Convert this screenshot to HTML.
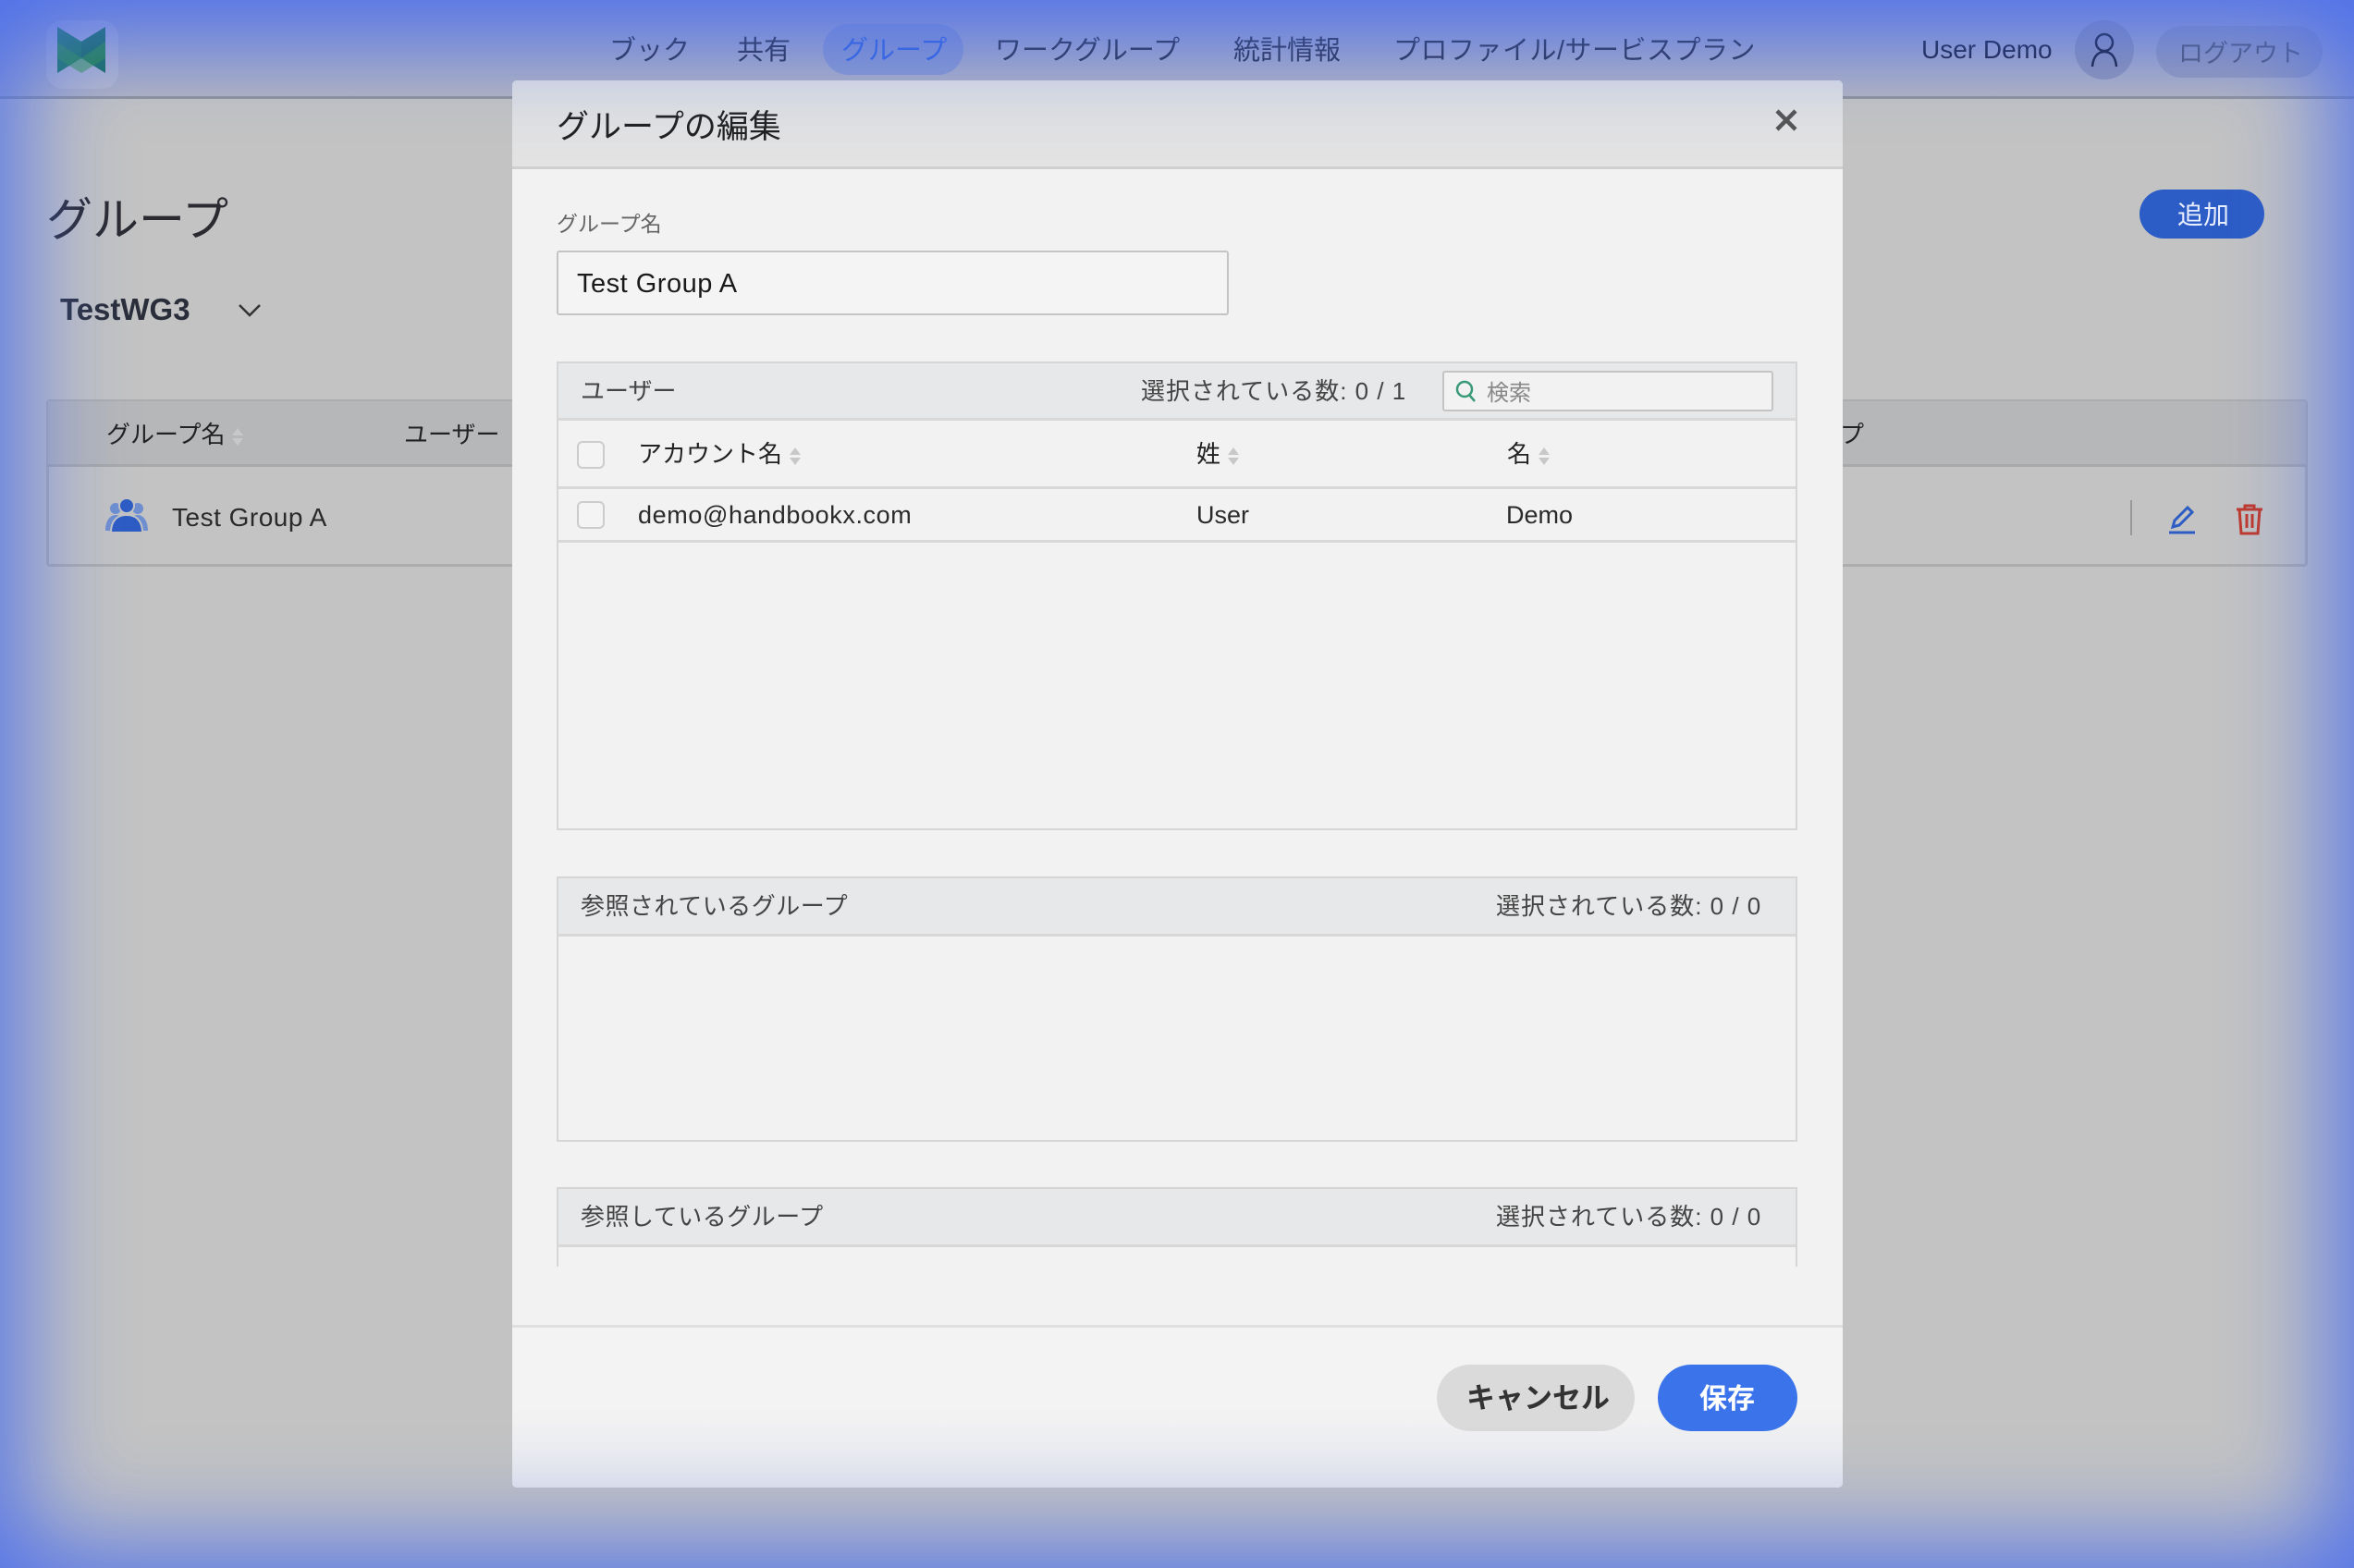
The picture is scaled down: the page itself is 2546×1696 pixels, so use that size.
<!DOCTYPE html>
<html><head><meta charset="utf-8"><style>
*{box-sizing:border-box;margin:0;padding:0}
body{width:2546px;height:1696px;overflow:hidden;position:relative;background:#c3c3c3;font-family:"Liberation Sans","Noto Sans CJK JP",sans-serif;color:#222}
.a{position:absolute;white-space:nowrap}
.nav{left:0;top:0;width:2546px;height:107px;background:linear-gradient(#8595d6,#b0b3c2);border-bottom:3px solid #8f939c}
.navi{font-size:29px;color:#2a3350;top:31px}
.vig{left:0;top:0;width:2546px;height:1696px;box-shadow:inset 0 0 110px 22px rgba(75,110,235,.95);pointer-events:none}
.modal{left:554px;top:87px;width:1439px;height:1522px;background:#f2f2f2;border-radius:5px;overflow:hidden}
.mh{left:0;top:0;width:1439px;height:96px;background:linear-gradient(#dcdee2,#e3e3e3);border-bottom:3px solid #d0d0d0}
.panel{border:2px solid #d6d6d6;background:#f2f2f2}
.ph{background:#e7e8ea;border-bottom:3px solid #d8d8d8}
.t26{font-size:26px;color:#444}
.cnt{letter-spacing:1px}
.sort{display:inline-block;vertical-align:middle;margin-left:8px;width:12px}
.sort:before{content:"";display:block;border:6px solid transparent;border-bottom:8px solid #c8c8c8;border-top:0;margin-bottom:3px}
.sort:after{content:"";display:block;border:6px solid transparent;border-top:8px solid #c8c8c8;border-bottom:0}
.cb{width:30px;height:30px;border:2px solid #ccc;border-radius:6px;background:#f4f4f4}
</style></head><body>
<div class="a nav"></div>
<div class="a" style="left:50px;top:22px;width:78px;height:74px;border-radius:18px;background:rgba(255,255,255,.12)"></div>
<svg class="a" style="left:62px;top:29px" width="52" height="50" viewBox="0 0 52 50">
<polygon points="0,0 26,16 26,34 0,50" fill="#1a7a5a"/><polygon points="52,0 26,16 26,34 52,50" fill="#17705a"/>
<polygon points="0,16 26,34 52,16 52,34 26,50 0,34" fill="#2e9a3a" opacity=".55"/></svg>
<div class="a navi" style="left:659px">ブック</div>
<div class="a navi" style="left:797px">共有</div>
<div class="a" style="left:890px;top:26px;width:152px;height:55px;border-radius:28px;background:rgba(110,135,215,.55)"></div>
<div class="a navi" style="left:910px;color:#3366e0">グループ</div>
<div class="a navi" style="left:1076px">ワークグループ</div>
<div class="a navi" style="left:1334px">統計情報</div>
<div class="a navi" style="left:1507px;letter-spacing:.5px">プロファイル/サービスプラン</div>
<div class="a" style="left:2078px;top:38px;font-size:28px;color:#1a2240">User Demo</div>
<div class="a" style="left:2244px;top:22px;width:64px;height:64px;border-radius:50%;background:rgba(120,130,175,.6)"></div>
<svg class="a" style="left:2260px;top:34px" width="32" height="40" viewBox="0 0 32 40" fill="none" stroke="#1a2240" stroke-width="2.5"><circle cx="16" cy="12" r="9"/><path d="M3 38 C4 26 10 22 16 22 C22 22 28 26 29 38"/></svg>
<div class="a" style="left:2332px;top:28px;width:180px;height:56px;border-radius:28px;background:rgba(120,130,175,.45)"></div>
<div class="a" style="left:2356px;top:36px;font-size:27px;color:#505a78">ログアウト</div>

<div class="a" style="left:50px;top:198px;font-size:50px;color:#2a2a30">グループ</div>
<div class="a" style="left:65px;top:316px;font-size:33px;font-weight:bold;color:#2a2e3a">TestWG3</div>
<svg class="a" style="left:257px;top:328px" width="26" height="16" viewBox="0 0 26 16" fill="none" stroke="#333" stroke-width="2.5"><path d="M2 2 L13 13 L24 2"/></svg>
<div class="a" style="left:2314px;top:205px;width:135px;height:53px;border-radius:27px;background:#2c5cc5"></div>
<div class="a" style="left:2355px;top:211px;font-size:28px;color:#e8eeff">追加</div>

<div class="a" style="left:50px;top:432px;width:2446px;height:181px;border:3px solid #adadad;border-radius:4px"></div>
<div class="a" style="left:52px;top:434px;width:2442px;height:71px;background:#b6b7b9;border-bottom:3px solid #a9a9a9"></div>
<div class="a" style="left:115px;top:450px;font-size:26px;color:#222">グループ名<span class="sort"></span></div>
<div class="a" style="left:437px;top:450px;font-size:26px;color:#222">ユーザー</div>
<div class="a" style="left:1990px;top:450px;font-size:26px;color:#222">プ</div>
<svg class="a" style="left:114px;top:538px" width="46" height="38" viewBox="0 0 46 38"><circle cx="11" cy="12" r="6" fill="#6f8fd0"/><circle cx="35" cy="12" r="6" fill="#6f8fd0"/><path d="M0 36 C0 24 6 19 11 19 C16 19 22 24 22 36Z M24 36 C24 24 30 19 35 19 C40 19 46 24 46 36Z" fill="#6f8fd0"/><circle cx="23" cy="9" r="8" fill="#2d5cc4" stroke="#c3c3c3" stroke-width="2"/><path d="M6 38 C6 25 13 19 23 19 C33 19 40 25 40 38Z" fill="#2d5cc4" stroke="#c3c3c3" stroke-width="2"/></svg>
<div class="a" style="left:186px;top:544px;font-size:28px;color:#2a2a2a;letter-spacing:.5px">Test Group A</div>
<div class="a" style="left:2304px;top:541px;width:2px;height:38px;background:#999"></div>
<svg class="a" style="left:2344px;top:546px" width="32" height="32" viewBox="0 0 32 32" fill="none" stroke="#2d5cc4" stroke-width="3"><path d="M6 24 L8 17 L22 3 L27 8 L13 22 Z"/><path d="M2 30 H30"/></svg>
<svg class="a" style="left:2418px;top:545px" width="30" height="34" viewBox="0 0 30 34" fill="none" stroke="#c0392b" stroke-width="3"><path d="M1 6 H29 M10 6 V2 H20 V6 M4 6 L6 32 H24 L26 6 M12 11 V26 M18 11 V26"/></svg>

<div class="a modal">
 <div class="a mh"></div>
 <div class="a" style="left:48px;top:22px;font-size:35px;color:#222">グループの編集</div>
 <svg class="a" style="left:1366px;top:31px" width="24" height="24" viewBox="0 0 24 24" stroke="#555" stroke-width="4.5"><path d="M2 2 L22 22 M22 2 L2 22"/></svg>
 <div class="a" style="left:48px;top:136px;font-size:23px;color:#666">グループ名</div>
 <div class="a" style="left:48px;top:184px;width:727px;height:70px;border:2px solid #c4c4c4;border-radius:3px;background:#f4f4f4"></div>
 <div class="a" style="left:70px;top:204px;font-size:29px;color:#1a1a1a;letter-spacing:.5px">Test Group A</div>

 <div class="a panel" style="left:48px;top:304px;width:1342px;height:507px"></div>
 <div class="a ph" style="left:50px;top:306px;width:1338px;height:62px"></div>
 <div class="a t26" style="left:74px;top:316px">ユーザー</div>
 <div class="a t26 cnt" style="left:680px;top:316px">選択されている数: 0 / 1</div>
 <div class="a" style="left:1006px;top:314px;width:358px;height:44px;border:2px solid #c4c4c4;border-radius:3px;background:#f2f2f2"></div>
 <svg class="a" style="left:1020px;top:324px" width="24" height="26" viewBox="0 0 24 26" fill="none" stroke="#3a9a78" stroke-width="2.5"><circle cx="10" cy="10" r="8"/><path d="M15 16 L21 23"/></svg>
 <div class="a" style="left:1054px;top:318px;font-size:24px;color:#888">検索</div>
 <div class="a" style="left:50px;top:439px;width:1338px;height:3px;background:#d8d8d8"></div>
 <div class="a" style="left:50px;top:497px;width:1338px;height:3px;background:#d8d8d8"></div>
 <div class="a cb" style="left:70px;top:390px"></div>
 <div class="a" style="left:136px;top:384px;font-size:26px;color:#222">アカウント名<span class="sort"></span></div>
 <div class="a" style="left:740px;top:384px;font-size:26px;color:#222">姓<span class="sort"></span></div>
 <div class="a" style="left:1076px;top:384px;font-size:26px;color:#222">名<span class="sort"></span></div>
 <div class="a cb" style="left:70px;top:455px"></div>
 <div class="a" style="left:136px;top:455px;font-size:27px;color:#2a2a2a;letter-spacing:.6px">demo@handbookx.com</div>
 <div class="a" style="left:740px;top:455px;font-size:27px;color:#2a2a2a">User</div>
 <div class="a" style="left:1075px;top:455px;font-size:27px;color:#2a2a2a">Demo</div>

 <div class="a panel" style="left:48px;top:861px;width:1342px;height:287px"></div>
 <div class="a ph" style="left:50px;top:863px;width:1338px;height:63px"></div>
 <div class="a t26" style="left:74px;top:873px;letter-spacing:.5px">参照されているグループ</div>
 <div class="a t26 cnt" style="left:1064px;top:873px">選択されている数: 0 / 0</div>

 <div class="a panel" style="left:48px;top:1197px;width:1342px;height:100px;border-bottom:0"></div>
 <div class="a ph" style="left:50px;top:1199px;width:1338px;height:63px"></div>
 <div class="a t26" style="left:74px;top:1209px;letter-spacing:.5px">参照しているグループ</div>
 <div class="a t26 cnt" style="left:1064px;top:1209px">選択されている数: 0 / 0</div>
 <div class="a" style="left:0;top:1283px;width:1439px;height:64px;background:#f2f2f2"></div>
 <div class="a" style="left:0;top:1346px;width:1439px;height:3px;background:#e0e0e0"></div>
 <div class="a" style="left:0;top:1349px;width:1439px;height:173px;background:linear-gradient(#f3f3f3 50%,#e8e9ed)"></div>
 <div class="a" style="left:1000px;top:1389px;width:214px;height:72px;border-radius:36px;background:#dadada"></div>
 <div class="a" style="left:1032px;top:1400px;font-size:31px;font-weight:bold;color:#333">キャンセル</div>
 <div class="a" style="left:1239px;top:1389px;width:151px;height:72px;border-radius:36px;background:#3b74ea"></div>
 <div class="a" style="left:1284px;top:1401px;font-size:30px;font-weight:bold;color:#fff">保存</div>
</div>
<div class="a vig"></div>
</body></html>
